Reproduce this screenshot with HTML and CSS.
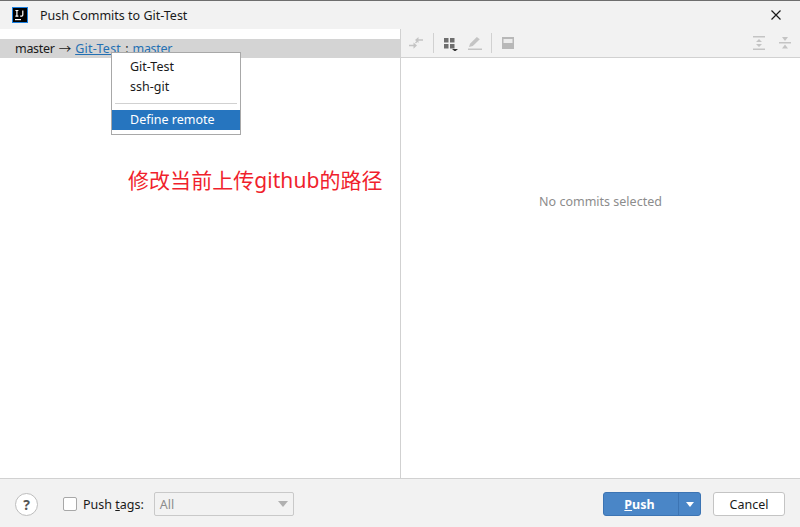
FILE: index.html
```html
<!DOCTYPE html>
<html lang="zh">
<head>
<meta charset="utf-8">
<title>Push Commits to Git-Test</title>
<link rel="stylesheet" href="styles.css">
</head>
<body>
<div class="dialog">
  <header class="titlebar">
    <svg class="logo" width="16" height="16" viewBox="0 0 16 16"><rect x="0.5" y="0.5" width="15" height="15" fill="#000" stroke="#1a7fe0"/><rect x="3" y="12" width="6" height="1.2" fill="#fff"/><path d="M3.400 3.500h3M4.900 3.500v5.600M3.400 9.100h3M10.800 3.500v4.600q0 1-1 1H8.200" fill="none" stroke="#fff" stroke-width="1.200"/></svg>
    <span class="title">Push Commits to Git-Test</span>
    <svg class="close" width="10" height="10" viewBox="0 0 10 10"><path d="M0.500 0.500l9 9M9.500 0.500l-9 9" stroke="#1a1a1a" stroke-width="1.200" fill="none"/></svg>
  </header>
  <main class="split">
    <section class="left">
      <div class="branch-row">
        <span class="tight">master</span><span class="arrow">→</span><a class="link u">Git-Test</a><span class="sep">:</span><a class="link tight">master</a>
      </div>
      <div class="menu">
        <div class="item">Git-Test</div>
        <div class="item">ssh-git</div>
        <div class="menu-sep"></div>
        <div class="item active">Define remote</div>
      </div>
      <div class="note">修改当前上传github的路径</div>
    </section>
    <section class="right">
      <div class="toolbar">
        <svg class="ic" width="16" height="16" viewBox="0 0 16 16"><path d="M7 5l3.500-3v2.200H15v1.600h-4.500V8zM9 10.500L5.500 7.500v2.200H1v1.600h4.500v2.500z" fill="#c4c4c4"/><path d="M7.500 8l1.800-1.800" stroke="#c4c4c4" stroke-width="1.200" fill="none"/></svg>
        <i class="tsep tsep-first"></i>
        <svg class="ic ic-grid" width="16" height="16" viewBox="0 0 16 16"><path d="M1 3h4.500v4.500H1zM7 3h4.500v4.500H7zM1 9h4.500v4.500H1zM7 9h4.500v4.500H7z" fill="#6e6e6e"/><path d="M9 14h6l-3 2.500z" fill="#333"/></svg>
        <svg class="ic" width="16" height="16" viewBox="0 0 16 16"><path d="M2 12l1-3.200 6.800-6.800 3 2.200-7 6.800z" fill="#c4c4c4"/><path d="M1 13.500h14V15H1z" fill="#c4c4c4"/></svg>
        <i class="tsep"></i>
        <svg class="ic" width="16" height="16" viewBox="0 0 16 16"><path d="M2 2h12v12H2z" fill="#b8b8b8"/><path d="M3.500 4h9v4h-9z" fill="#ececec"/></svg>
        <span class="spacer"></span>
        <svg class="ic" width="16" height="16" viewBox="0 0 16 16"><path d="M2 1h12v1.500H2zM2 13.500h12V15H2zM8 4l3 3H5zM8 12L5 9h6z" fill="#c4c4c4"/></svg>
        <svg class="ic ic-last" width="16" height="16" viewBox="0 0 16 16"><path d="M2 7h12v1.500H2zM8 6L5 2h6zM8 9.500l3 4H5z" fill="#c4c4c4"/></svg>
      </div>
      <div class="empty">No commits selected</div>
    </section>
  </main>
  <footer class="footer">
    <div class="help">?</div>
    <label class="check"><span class="box"></span><span>Push <u>t</u>ags:</span></label>
    <div class="combo"><span>All</span><i class="caret"></i></div>
    <span class="spacer"></span>
    <div class="push"><span class="push-main"><u>P</u>ush</span><span class="push-drop"><i></i></span></div>
    <div class="cancel">Cancel</div>
  </footer>
</div>
</body>
</html>
```

FILE: styles.css
```css
* { box-sizing: border-box; }
html, body { margin: 0; padding: 0; }
body { width: 800px; height: 527px; overflow: hidden; font-family: "Noto Sans", "Noto Sans CJK SC", sans-serif; font-size: 12.500px; color: #1a1a1a; }
.dialog { width: 800px; height: 527px; display: flex; flex-direction: column; background: #f2f2f2; border-top: 1px solid #6e6e6e; }
.titlebar { height: 28px; flex: none; display: flex; align-items: center; padding-left: 12px; background: #f2f2f2; }
.title { margin-left: 12px; font-size: 12.500px; }
.close { margin-left: auto; margin-right: 19px; }
.split { flex: 1; display: flex; min-height: 0; border-bottom: 1px solid #d1d1d1; }
.left { flex: none; position: relative; background: #fff; padding-top: 10px; border-right: 1px solid #d1d1d1; width: 401px; }
.branch-row { height: 19px; background: #d4d4d4; padding-left: 15px; display: flex; align-items: center; gap: 4px; white-space: nowrap; }
.tight { letter-spacing: -0.300px; }
.link { color: #2470b3; }
.link.u { text-decoration: underline; letter-spacing: 0.250px; }
.menu { position: absolute; left: 111px; top: 23px; width: 130px; height: 83px; background: #fff; border: 1px solid #a8a8a8; padding-top: 4px; }
.item { height: 20px; line-height: 20px; padding-left: 18px; }
.menu-sep { height: 1px; background: #d1d1d1; margin: 6px 3px; }
.item.active { background: #2675bf; color: #fff; }
.note { position: absolute; left: 128px; top: 136px; font-size: 21px; line-height: 30px; letter-spacing: 0.050px; color: #f01f2d; white-space: nowrap; font-family: "Noto Sans", "Noto Sans CJK SC", sans-serif; }
.right { flex: 1; display: flex; flex-direction: column; background: #fff; min-width: 0; }
.toolbar { height: 29px; flex: none; display: flex; align-items: center; gap: 8px; padding: 0 7px; background: #f2f2f2; border-bottom: 1px solid #d1d1d1; }
.ic { flex: none; display: block; }
.ic-last { margin-left: 2px; }
.ic-grid { margin-left: 1px; }
.tsep { width: 1px; height: 20px; background: #d1d1d1; flex: none; }
.tsep-first { margin-left: 1px; }
.spacer { flex: 1; }
.empty { flex: 1; display: flex; align-items: center; justify-content: center; color: #8c8c8c; font-size: 12.500px; padding-bottom: 133px; }
.footer { height: 48px; flex: none; display: flex; align-items: center; padding: 2px 15px 0; background: #f2f2f2; }
.help { width: 23px; height: 23px; border-radius: 50%; border: 1px solid #bdbdbd; background: #fff; display: flex; align-items: center; justify-content: center; font-weight: 700; font-size: 14px; color: #555; }
.check { display: flex; align-items: center; gap: 6px; margin-left: 25px; }
.box { width: 14px; height: 14px; border: 1px solid #a8a8a8; border-radius: 2px; background: #fff; }
.combo { width: 140px; height: 24px; margin-left: 10px; border: 1px solid #c9c9c9; border-radius: 2px; display: flex; align-items: center; justify-content: space-between; padding: 0 5px; color: #8c8c8c; }
.caret { width: 0; height: 0; border-left: 5px solid transparent; border-right: 5px solid transparent; border-top: 6px solid #b0b0b0; }
.push { width: 98px; height: 24px; display: flex; background: #4a86c7; border: 1px solid #3c74b3; border-radius: 3px; color: #fff; font-weight: 700; }
.push-main { flex: 1; display: flex; align-items: center; justify-content: center; padding-right: 3px; white-space: pre; }
.push-drop { width: 22px; border-left: 1px solid #3c74b3; display: flex; align-items: center; justify-content: center; }
.push-drop i { width: 0; height: 0; border-left: 4.500px solid transparent; border-right: 4.500px solid transparent; border-top: 5px solid #fff; }
.cancel { width: 72px; height: 24px; margin-left: 12px; background: #fff; border: 1px solid #c4c4c4; border-radius: 3px; display: flex; align-items: center; justify-content: center; }
```
